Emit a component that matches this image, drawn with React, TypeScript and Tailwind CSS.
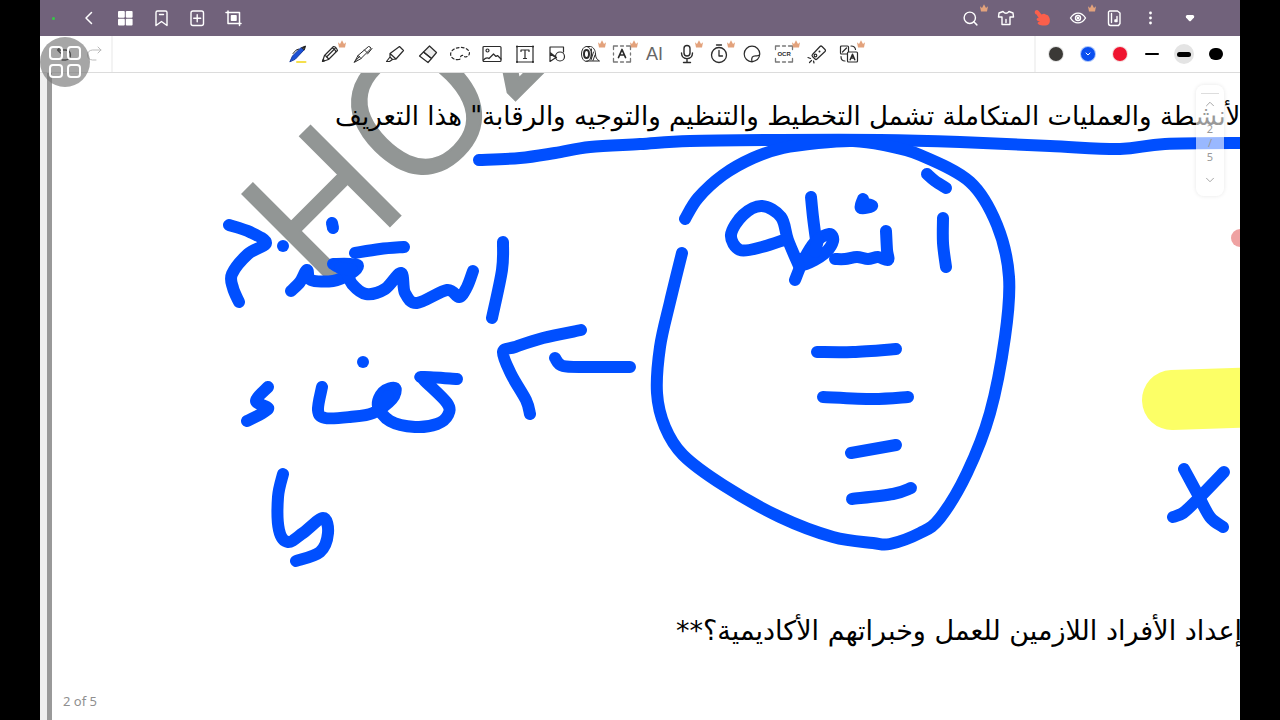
import React from 'react';
import { ChevronDown, ChevronUp, Search } from 'lucide-react';

type Point = [number, number];

const INK = '#004fff';

// pen strokes, in canvas coordinates
const strokes: Point[][] = [
  // underline
  [[479, 160], [520, 158], [555, 153], [590, 147], [640, 144], [690, 141], [780, 140], [880, 140], [960, 142], [1050, 146], [1120, 149], [1165, 144], [1250, 143]],
  // outline around the list
  [[685, 219], [698, 198], [723, 175], [753, 158], [783, 148], [818, 143], [853, 141], [883, 145], [920, 155], [970, 182], [997, 225], [1009, 277], [1005, 337], [990, 413], [967, 473], [940, 518], [920, 533], [890, 544], [873, 543], [833, 537], [780, 517], [723, 485], [683, 455], [665, 427], [657, 393], [660, 347], [670, 302], [682, 253]],
  [[943, 218], [943, 243], [946, 267]],
  [[927, 174], [935, 181], [946, 188]],
  [[863, 199], [861, 208], [872, 206], [863, 203]],
  [[886, 231], [887, 250], [888, 260], [878, 257], [868, 259], [857, 257], [845, 259], [835, 259]],
  [[811, 197], [813, 217], [816, 240]],
  [[795, 280], [803, 261], [815, 242], [829, 234], [833, 241], [824, 254], [806, 264], [800, 262], [814, 250], [819, 254], [811, 258]],
  [[818, 240], [815, 252]],
  [[799, 266], [788, 240], [781, 217], [762, 206], [743, 215], [731, 235], [740, 250], [762, 247], [784, 240]],
  [[817, 352], [853, 352], [896, 349]],
  [[823, 397], [873, 399], [908, 397]],
  [[851, 453], [896, 445]],
  [[852, 499], [893, 494], [911, 488]],
  // first word on the left
  [[229, 225], [250, 232], [266, 243], [248, 254], [232, 274], [233, 288], [239, 302]],
  [[283, 246], [283, 246]],
  [[332, 223], [333, 228]],
  [[291, 291], [300, 282], [307, 270], [311, 280], [333, 281], [350, 274], [358, 266], [350, 264], [333, 264]],
  [[336, 266], [346, 271], [352, 284], [366, 294], [385, 289], [401, 273], [405, 293], [417, 303], [447, 290], [459, 297], [467, 287], [473, 271]],
  [[340, 268], [352, 270]],
  [[355, 253], [380, 249], [404, 247]],
  [[503, 242], [502, 270], [492, 318]],
  // arrow
  [[581, 330], [543, 338], [515, 347], [503, 352], [511, 374], [526, 400], [530, 414]],
  [[555, 358], [563, 366], [590, 367], [630, 367]],
  // second word
  [[363, 362], [363, 362]],
  [[457, 379], [424, 377], [424, 380], [447, 403], [448, 415], [437, 424], [415, 427], [390, 421], [378, 406], [383, 392], [395, 388], [392, 399], [373, 413], [350, 417], [325, 418], [318, 410], [322, 387]],
  [[384, 404], [388, 396]],
  [[268, 387], [256, 401], [268, 409], [247, 421]],
  [[283, 474], [278, 497], [279, 530], [288, 542], [303, 533], [323, 518], [328, 533], [320, 552], [296, 561]],
  // cross
  [[1184, 469], [1197, 493], [1210, 517], [1223, 527]],
  [[1224, 472], [1197, 500], [1183, 513], [1173, 517]],
];

const smooth = (pts: Point[]) => {
  let d = `M${pts[0][0]} ${pts[0][1]}`;
  for (let i = 0; i < pts.length - 1; i++) {
    const p0 = pts[i - 1] ?? pts[i];
    const p1 = pts[i];
    const p2 = pts[i + 1];
    const p3 = pts[i + 2] ?? p2;
    d += `C${p1[0] + (p2[0] - p0[0]) / 6} ${p1[1] + (p2[1] - p0[1]) / 6} ${p2[0] - (p3[0] - p1[0]) / 6} ${p2[1] - (p3[1] - p1[1]) / 6} ${p2[0]} ${p2[1]}`;
  }
  return d;
};

const Icon: React.FC<{ children: React.ReactNode; width?: number }> = ({ children, width = 1 }) => (
  <svg
    viewBox="0 0 20 20"
    className="size-5"
    fill="none"
    stroke="currentColor"
    strokeWidth={width}
    strokeLinecap="round"
    strokeLinejoin="round"
  >
    {children}
  </svg>
);

const Crown = () => (
  <svg viewBox="0 0 8 8" className="absolute top-1 right-0 size-2 text-[#e3a27c]" fill="currentColor">
    <path d="M0 2.2 2 4 4 .3 6 4l2-1.8L7 7.5H1z" />
  </svg>
);

interface Tool {
  label: string;
  icon: React.ReactNode;
  crown?: boolean;
}

const ToolButton: React.FC<{ tool: Tool; className: string }> = ({ tool, className }) => (
  <button type="button" aria-label={tool.label} className={`relative flex h-9 items-center justify-center ${className}`}>
    {tool.icon}
    {tool.crown && <Crown />}
  </button>
);

const navLeft: Tool[] = [
  { label: 'Back', icon: <Icon width={1.5}><path d="M12.500 4.500 7 10l5.500 5.500" /></Icon> },
  {
    label: 'Pages',
    icon: (
      <svg viewBox="0 0 20 20" className="size-5" fill="currentColor">
        <rect x="3" y="3" width="6.800" height="6.700" rx="1" />
        <rect x="10.800" y="3" width="6.800" height="6.700" rx="1" />
        <rect x="3" y="10.700" width="6.800" height="6.700" rx="1" />
        <rect x="10.800" y="10.700" width="6.800" height="6.700" rx="1" />
      </svg>
    ),
  },
  { label: 'Bookmark', icon: <Icon width={1.4}><path d="M5 17.500V4.500q0-1.500 1.500-1.500h8q1.500 0 1.500 1.500v13l-5.500-4zM8.500 6.500h4" /></Icon> },
  { label: 'Add page', icon: <Icon width={1.4}><rect x="4" y="3" width="12.500" height="14.500" rx="2" /><path d="M10.200 6.700v7M6.700 10.200h7" /></Icon> },
  { label: 'Crop', icon: <Icon width={1.5}><path d="M3 4.500h13.500v13M5 3v12.500h13" /><path d="M8.500 7.800h4.500v4.500H8.500z" fill="currentColor" /></Icon> },
];

const navRight: Tool[] = [
  { label: 'Search', crown: true, icon: <Search size={17} strokeWidth={2} /> },
  { label: 'Theme', icon: <Icon width={1.4}><path d="M7 3.500 3 5 2.500 9H6v7.500h8V9h3.500L17 5l-4-1.500Q10 7 7 3.500zM10 11.500v3" /></Icon> },
  {
    label: 'Touch mode',
    icon: (
      <svg viewBox="0 0 20 20" className="size-5 text-[#fb5f4b]" fill="currentColor">
        <path d="M3.500 2.500c1-1 2.500-.6 3.200.4L9.500 6.500c2-1.300 3.500-1 4.500.2 1.500-.3 2.500.8 2.800 2 1 1.200 1.200 3 1 5-.3 2-2 3.800-4.500 3.800-2.800.2-4.800-.2-6.500-1-1.500-.8-1.500-2-.2-2.500l1.500-.3c-2-.5-3.700-1.500-3.500-2.800.2-1 1.500-1 2.200-.6L4.500 6.500C3 6 2 4 3.500 2.500z" />
      </svg>
    ),
  },
  { label: 'View', crown: true, icon: <Icon width={1.4}><path d="M2.500 10c4-6.500 11-6.500 15 0-4 6.500-11 6.500-15 0z" /><circle cx="10" cy="10" r="2.500" /><circle cx="10" cy="10" r=".6" /></Icon> },
  { label: 'Notebook', icon: <Icon width={1.4}><path d="M5.500 3h8l2.500 2v10.500L14.500 17.500H6.500Q4.500 17.500 4.500 15V4zM7.500 5.500v9M13 8.500v5h-2v-1.500h2" /></Icon> },
  {
    label: 'More',
    icon: (
      <svg viewBox="0 0 20 20" className="size-5" fill="currentColor">
        <circle cx="10.500" cy="5" r="1.400" /><circle cx="10.500" cy="10" r="1.400" /><circle cx="10.500" cy="15" r="1.400" />
      </svg>
    ),
  },
];

const tools: Tool[] = [
  {
    label: 'Pen',
    icon: (
      <Icon>
        <path d="M9 18h8.500" stroke="#f5df4d" strokeWidth="2" />
        <path d="m2 17.500 2.500-5.500L13 3.500 16 6l-8.500 9z" fill="#1a4fd6" stroke="#173a9c" />
        <path d="m14 3.500 3.500-1.500-1 3.500z" fill="#222" stroke="#222" />
        <path d="M5 9.500q3-4.500 5.500-4.500" stroke="#222" />
      </Icon>
    ),
  },
  { label: 'Pencil', crown: true, icon: <Icon width={1.2}><path d="m2.500 17.500 2-6L13.500 2.500q2.500 0 4 4L8.500 15.500zM4.500 11.500q3 .5 4 4M6.500 13l8.500-8.500M12 4q3 .5 4 4" /><path d="m2.500 17.500.7-2 1.300 1.300z" fill="currentColor" /></Icon> },
  { label: 'Fountain pen', icon: <Icon><path d="m1.500 18 3.500-6.500L15.500 2.500q2 0 2.500 2L8 14.500zM1.500 18l5-5.500M5 11.500l3 3M11.500 6l2.500 2.500M14.500 10l4.500-5.500" /></Icon> },
  { label: 'Highlighter', icon: <Icon width={1.2}><path d="m1.500 17.500 3.500-4.500 2.500 2.500-3 2zM5 13V9.500L14.500 2.500l4 4L11 15l-3.500.5M5 9.500l6 5.500" /></Icon> },
  { label: 'Eraser', icon: <Icon width={1.2}><path d="m5.500 8 6-6 7 6.500-5 6z" fill="#ececec" /><path d="m1.500 12 4-4 8 6.500-3.500 4z" /></Icon> },
  { label: 'Lasso', icon: <Icon width={1.2}><path strokeDasharray="2.600 2.400" d="M9 15.500C2 16.500-1 11 1.500 7.500 5 2.500 15 2 18.500 6.500 21 10 18 13 15 13c-2-2.500-4-2-4.500 0-.2 1.500-.5 2.500-1.500 2.500z" /></Icon> },
  { label: 'Image', icon: <Icon width={1.2}><rect x="1" y="2.500" width="18" height="15" rx="1" /><circle cx="5.500" cy="6.500" r="1.500" /><path d="M1.500 16q3-3.500 5.500-1.500l4.500-4.500 2.500 2.500 1.500-1 3.500 3.500" /></Icon> },
  { label: 'Text box', icon: <Icon width={1.2}><rect x="2" y="2.500" width="16" height="15.500" /><path d="M6 7.500V6h8v1.500M10 6v8.500M8.500 14.500h3" /><path strokeWidth="2" d="M2 2.500h0M18 2.500h0M2 18h0M18 18h0" /></Icon> },
  { label: 'Shapes', icon: <Icon width={1.2}><path d="M3 10V3h13.500v5M3 10v7.500l6-4zM3 3v5.500l6.500 5" /><circle cx="13" cy="12.500" r="4.500" /></Icon> },
  {
    label: 'Tape',
    crown: true,
    icon: (
      <Icon>
        <ellipse cx="6.500" cy="10" rx="5" ry="7.500" /><ellipse cx="6.500" cy="10" rx="2.500" ry="4" strokeWidth="2" />
        <path d="M6.500 2.500h4c3 .5 5 4 5 7.500 0 3 1 5.500 4 7H6.500M13.500 8 11 16M15 11l-2 5.500M11.500 5 11 14" />
      </Icon>
    ),
  },
  { label: 'Text recognition', crown: true, icon: <Icon width={1.3}><path d="M1.500 5.500V2h4M14.500 2h4v3.500M18.500 14.500V18h-4M5.500 18h-4v-3.500M8.500 2h3M8.500 18h3M1.500 9v2M18.500 9v2" stroke="#777" /><path strokeWidth="1.700" d="m6.500 13.500 3.500-8 3.500 8M7.700 11h4.600" /></Icon> },
  { label: 'AI', icon: <span className="font-['Liberation_Sans',sans-serif] text-lg text-[#666]">AI</span> },
  { label: 'Microphone', crown: true, icon: <Icon width={1.4}><rect x="7" y="1.500" width="6" height="10.500" rx="3" /><path d="M4.500 9c0 7.500 11 7.500 11 0M10 15v3M6.500 18.500h7" /></Icon> },
  { label: 'Timer', crown: true, icon: <Icon width={1.3}><circle cx="10" cy="11" r="7.500" /><path d="M7.500 1h5M10 6.500V12h3.500" /></Icon> },
  { label: 'Sticker', icon: <Icon width={1.2}><path d="M17.800 10A7.800 7.800 0 1 0 10 17.800M10 17.800c-1-4.500.5-6 3.500-6 2.500.2 4-.3 4.300-1.800-.3 4-3 7-7.800 7.800" /></Icon> },
  {
    label: 'OCR',
    crown: true,
    icon: (
      <span className="relative flex items-center justify-center">
        <Icon width={1.3}><path d="M1.500 5.500V2h4M14.500 2h4v3.500M18.500 14.500V18h-4M5.500 18h-4v-3.500M8.500 2h3M8.500 18h3" stroke="#777" /></Icon>
        <span className="absolute font-['Liberation_Sans',sans-serif] text-[6px] font-bold">OCR</span>
      </span>
    ),
  },
  { label: 'Laser pointer', icon: <Icon width={1.2}><path d="M5.500 10.500 13 2.500q1-1 2 0l3 3q1 1 0 2l-8 7.500q-1 1-2 0l-2.500-2.500q-1-1 0-2zM3.500 14.500 1 13.500M4.500 16.500 2.500 18.500M6.500 17l.5 2" /><circle cx="8.500" cy="11.500" r="1.300" /><path strokeWidth="2" d="M12.500 7.500h0" /></Icon> },
  { label: 'Translate', crown: true, icon: <Icon width={1.2}><rect x="1.500" y="2" width="8" height="8" rx="1" /><path d="m3.500 8 4-4M12 2q4 0 4.500 3.500M2 12.500q0 4.500 4 4.500" /><rect x="8.500" y="8" width="10" height="10" rx="1" fill="#fff" /><path strokeWidth="1.500" d="m11.200 15.800 2.300-5.600 2.300 5.600M12 14h3" /></Icon> },
];

const colors = [
  { label: 'Charcoal', swatch: 'bg-[#3b3936] ring-[#e3e3e3]' },
  { label: 'Blue', swatch: 'bg-[#0a4ff0] ring-[#a9c4fb]', selected: true },
  { label: 'Red', swatch: 'bg-[#ef142f] ring-[#f3dede]' },
];

const widths = [
  { label: 'Thin', line: 'h-[2px] w-[14px]', halo: '' },
  { label: 'Medium', line: 'h-[5px] w-[14px]', halo: 'bg-[#e4e4e4]' },
  { label: 'Thick', line: 'h-3 w-[14px]', halo: '' },
];

const TopBar = () => (
  <header className="flex h-9 items-center justify-between bg-[#71627b] text-white">
    <div className="flex items-center">
      <span className="mr-4 ml-3 size-[3px] rounded-full bg-[#35c946]" />
      {navLeft.map(tool => <ToolButton key={tool.label} tool={tool} className="w-9" />)}
    </div>
    <div className="flex items-center pr-8">
      {navRight.map(tool => <ToolButton key={tool.label} tool={tool} className="w-9" />)}
      <button type="button" aria-label="Collapse" className="ml-1 flex h-9 w-9 items-center justify-center">
        <svg viewBox="0 0 10 8" className="h-2 w-[10px]" fill="currentColor">
          <path d="M2 1h6q2 .8 1 2.500L5.800 7q-.8.700-1.600 0L1 3.500Q0 1.800 2 1z" />
        </svg>
      </button>
    </div>
  </header>
);

const Toolbar = () => (
  <div className="flex h-[37px] items-center border-b border-[#dcdcdc] bg-white text-[#2b2b2b]">
    <div className="flex h-9 w-[73px] shrink-0 items-center border-r-2 border-[#f3f3f3] pl-2">
      <ToolButton className="w-8 text-black" tool={{ label: 'Undo', icon: <Icon width={1.3}><path d="M6.500 3 3.500 6l3 3M3.500 6H11.500q5 .5 5 5t-5 5H8" /></Icon> }} />
      <ToolButton className="w-7 text-[#bbb]" tool={{ label: 'Redo', icon: <Icon><path d="m14 3 3 3-3 3M17 6H8.500q-5 .5-5 5t5 5H12" /></Icon> }} />
    </div>
    <div className="flex flex-1 justify-center">
      <div className="flex w-full max-w-[583px] justify-between">
        {tools.map(tool => <ToolButton key={tool.label} tool={tool} className="w-8" />)}
      </div>
    </div>
    <div className="flex h-9 shrink-0 items-center border-l-2 border-[#f3f3f3] pr-2 pl-1">
      {colors.map(color => (
        <button key={color.label} type="button" aria-label={color.label} className="flex h-9 w-8 items-center justify-center">
          <span className={`flex size-[14px] items-center justify-center rounded-full ring-1 ${color.swatch}`}>
            {color.selected && <ChevronDown size={8} strokeWidth={3} className="text-white" />}
          </span>
        </button>
      ))}
      {widths.map(width => (
        <button key={width.label} type="button" aria-label={width.label} className="flex h-9 w-8 items-center justify-center">
          <span className={`flex size-5 items-center justify-center rounded-full ${width.halo}`}>
            <span className={`rounded-full bg-black ${width.line}`} />
          </span>
        </button>
      ))}
    </div>
  </div>
);

const PageStepper = () => (
  <nav className="absolute top-3 right-4 flex w-7 flex-col items-center rounded-lg bg-white/60 pt-2 text-[11px] leading-[14px] text-[#999] shadow-[0_0_4px_rgba(0,0,0,0.1)]">
    <span className="h-px w-[18px] bg-[#ddd]" />
    <button type="button" aria-label="Previous page" className="mb-2 flex h-5 items-center"><ChevronUp size={14} strokeWidth={1.5} /></button>
    <span>2</span>
    <span>/</span>
    <span>5</span>
    <button type="button" aria-label="Next page" className="flex h-8 items-center"><ChevronDown size={14} strokeWidth={1.5} /></button>
  </nav>
);

const Note: React.FC = () => (
  <main className="relative flex flex-1 overflow-hidden bg-white">
    <div className="w-[7px] shrink-0 bg-[#efefef]" />
    <div className="w-[5px] shrink-0 bg-[#999]" />

    <svg viewBox="40 73 1200 647" className="absolute top-0 left-0 h-[647px] w-[1200px]" aria-hidden="true">
      <text transform="translate(320 296) rotate(-45)" fill="#929695" stroke="#929695" strokeWidth="2" fontSize="178" fontFamily="'Open Sans', 'Noto Sans', sans-serif">HOZ</text>
      <path d="M1172 400 1260 397" stroke="#fcff66" strokeWidth="60" strokeLinecap="round" />
    </svg>

    <article className="relative flex min-w-0 flex-1 flex-col overflow-hidden font-['DejaVu_Sans','Noto_Sans',sans-serif] leading-10 text-black">
      <div className="flex pt-[23px] pl-[283px] text-[26px]">
        <p dir="rtl" lang="ar" className="shrink-0 whitespace-nowrap">
          لأنشطة والعمليات المتكاملة تشمل التخطيط والتنظيم والتوجيه والرقابة" هذا التعريف
        </p>
      </div>
      <div className="mt-[475px] flex pl-[624px] text-[27px]">
        <p dir="rtl" lang="ar" className="shrink-0 whitespace-nowrap">
          إعداد الأفراد اللازمين للعمل وخبراتهم الأكاديمية؟**
        </p>
      </div>
    </article>

    <svg viewBox="40 73 1200 647" className="absolute top-0 left-0 h-[647px] w-[1200px]" fill="none" strokeLinecap="round" strokeLinejoin="round" aria-hidden="true">
      {strokes.map((pts, i) => (
        <path key={i} d={smooth(pts)} stroke={INK} strokeWidth={12} />
      ))}
      <circle cx="1240" cy="238" r="9" fill="#efa2a2" />
    </svg>

    <PageStepper />
    <span className="absolute bottom-[9px] left-[23px] text-[13px] leading-5 text-[#8f8f8f]">2 of 5</span>
  </main>
);

const App: React.FC = () => (
  <div className="min-h-screen bg-black px-10 font-['Noto_Sans','Open_Sans',sans-serif]">
    <div className="relative flex min-h-screen flex-col overflow-hidden">
      <TopBar />
      <Toolbar />
      <Note />
      <button type="button" aria-label="Quick menu" className="absolute top-[37px] left-0 grid size-[50px] grid-cols-[14px_14px] place-content-center gap-1 rounded-full bg-[#777]/65">
        {[0, 1, 2, 3].map(i => (
          <span key={i} className="size-[14px] rounded-[4px] border-2 border-white" />
        ))}
      </button>
    </div>
  </div>
);

export default App;
